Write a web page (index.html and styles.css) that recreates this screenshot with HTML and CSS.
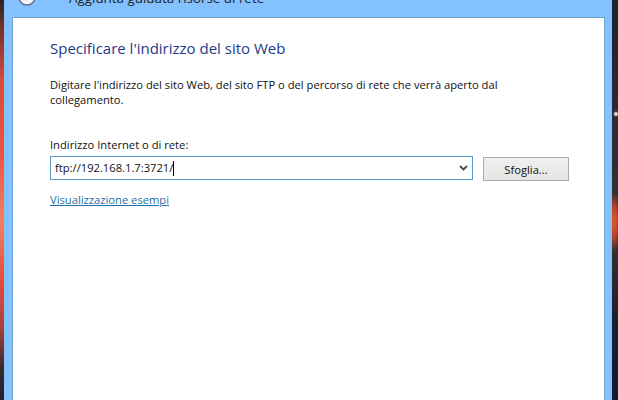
FILE: index.html
```html
<!DOCTYPE html>
<html lang="it">
<head>
  <meta charset="UTF-8">
  <title>Aggiunta guidata risorse di rete</title>
  <link rel="stylesheet" href="styles.css">
</head>
<body>

  <div class="wallpaper wallpaper-left"></div>

  <div class="window">
    <div class="titlebar">
      <span class="back-button">
        <svg width="18" height="18" viewBox="0 0 18 18">
          <circle cx="9" cy="9" r="8" fill="#f4f7fa" stroke="#5f7488" stroke-width="1.5"/>
          <path d="M13 9H6M9 6L6 9l3 3" fill="none" stroke="#8a98a6" stroke-width="1.5"/>
        </svg>
      </span>
      <span class="title">Aggiunta guidata risorse di rete</span>
    </div>

    <div class="content">
      <h1 class="heading">Specificare l'indirizzo del sito Web</h1>
      <p class="description">Digitare l'indirizzo del sito Web, del sito FTP o del percorso di rete che verrà aperto dal collegamento.</p>

      <label class="field-label" for="address">Indirizzo Internet o di rete:</label>
      <div class="field-row">
        <div class="combo">
          <span class="combo-value" id="address">ftp://192.168.1.7:3721/</span>
          <span class="caret"></span>
          <svg class="combo-arrow" width="9" height="6" viewBox="0 0 9 6">
            <path d="M1 1l3.5 3.5L8 1" fill="none" stroke="#4a4a4a" stroke-width="1.8"/>
          </svg>
        </div>
        <button class="browse">Sfoglia...</button>
      </div>

      <a class="examples" href="#">Visualizzazione esempi</a>
    </div>
  </div>

  <div class="wallpaper wallpaper-right"></div>

</body>
</html>
```

FILE: styles.css
```css
html, body {
  height: 100%;
}
body {
  font-family: "Open Sans", "Noto Sans", sans-serif;
  font-size: 11.2px;
  margin: 0;
  padding: 0;
  display: flex;
  overflow: hidden;
  color: #111;
  background-color: #141a26;
}
.wallpaper {
  height: 400px;
}
.wallpaper-left {
  width: 4px;
  background: linear-gradient(to bottom, #2a2026 0%, #6e3028 6%, #d84a38 20%, #f0543e 40%, #f08060 55%, #e84c3c 70%, #a84038 82%, #3a2a30 92%, #20202a 100%);
}
.wallpaper-right {
  width: 6px;
  background:
    radial-gradient(circle at 4px 114px, #e8e0d0 0, #e8e0d0 1px, transparent 3px),
    radial-gradient(ellipse 7px 30px at 2px 222px, #e85a2a 0, #b8452a 50%, transparent 100%),
    linear-gradient(to bottom, #1c2230 0%, #2a2c36 30%, #3a3230 60%, #1a2030 80%, #141a2c 100%);
}
.window {
  flex: 1;
  height: 400px;
  padding: 0 7px 0 8px;
  background-color: #84c1ff;
  display: flex;
  flex-direction: column;
}
.titlebar {
  height: 17px;
  flex-shrink: 0;
  display: flex;
  align-items: flex-end;
  overflow: hidden;
  padding-left: 6px;
}
.back-button {
  height: 18px;
  margin-bottom: 11px;
  line-height: 0;
}
.title {
  margin-left: 33px;
  margin-bottom: 9px;
  font-size: 13.4px;
  line-height: 20px;
  color: #222;
}
.content {
  flex: 1;
  background-color: #fff;
  border: 1px solid #6fa3d2;
  border-bottom: none;
  padding: 20px 35px 0 37px;
}
.heading {
  margin: 0;
  font-size: 15px;
  font-weight: normal;
  line-height: 20px;
  color: #1f3a8a;
}
.description {
  margin: 19px 0 0;
  max-width: 480px;
  line-height: 15px;
}
.field-label {
  display: block;
  margin-top: 30px;
  line-height: 16px;
}
.field-row {
  display: flex;
  align-items: flex-start;
  gap: 10px;
  margin-top: 3px;
}
.combo {
  flex: 1;
  height: 24px;
  box-sizing: border-box;
  border: 1px solid #5b9ac8;
  display: flex;
  align-items: center;
  padding: 0 4px;
}
.combo-value {
  line-height: 16px;
}
.caret {
  width: 1px;
  height: 15px;
  background-color: #000;
}
.combo-arrow {
  margin-left: auto;
}
.browse {
  width: 86px;
  height: 24px;
  margin-top: 1px;
  font: inherit;
  color: inherit;
  border: 1px solid #acacac;
  background: linear-gradient(to bottom, #f0f0f0, #e5e5e5);
  padding: 0;
}
.examples {
  display: inline-block;
  margin-top: 11px;
  line-height: 16px;
  color: #1f6fa8;
  text-decoration: underline;
}
```
